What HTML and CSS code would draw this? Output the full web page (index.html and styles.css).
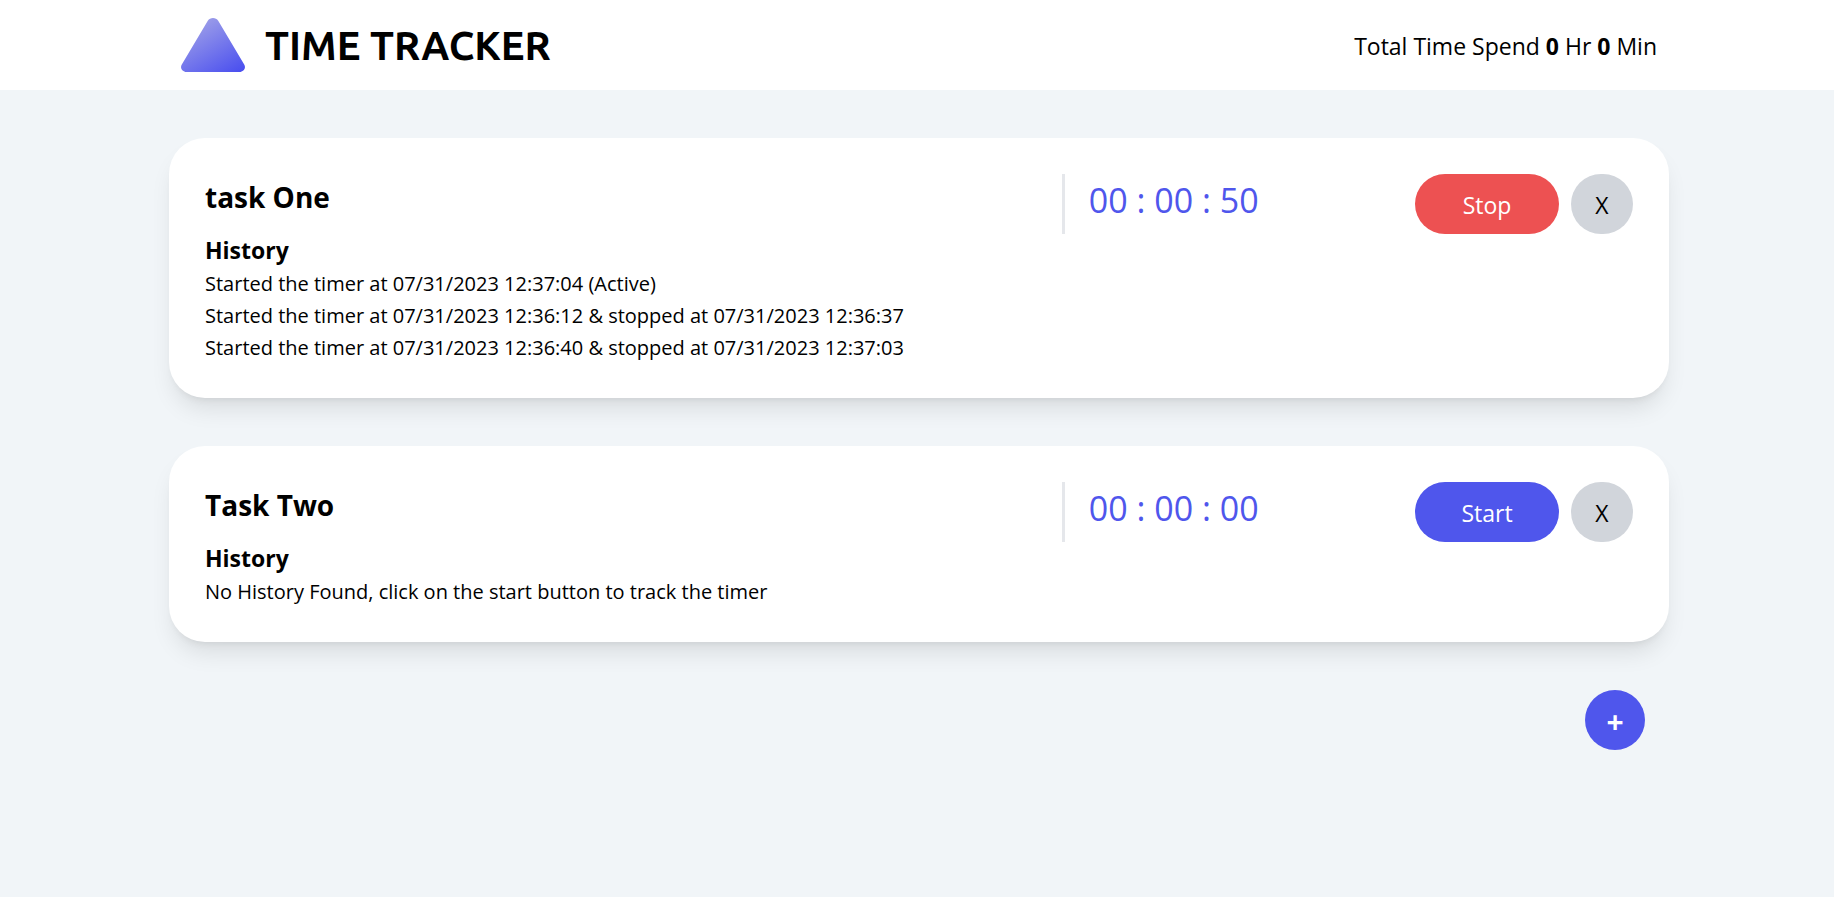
FILE: index.html
```html
<!DOCTYPE html>
<html lang="en">
<head>
<meta charset="utf-8">
<meta name="viewport" content="width=device-width, initial-scale=1">
<title>Time Tracker</title>
<link rel="stylesheet" href="styles.css">
</head>
<body>
<header class="topbar">
  <div class="container topbar-inner">
    <div class="brand">
      <svg class="brand-mark" viewBox="0 0 64 54" aria-hidden="true">
        <defs>
          <linearGradient id="mark" x1="0.2" y1="0" x2="0.9" y2="1">
            <stop offset="0" stop-color="#a3a4e8"/>
            <stop offset="1" stop-color="#4b50ef"/>
          </linearGradient>
        </defs>
        <path fill="url(#mark)" d="M26.8 2.8C29 -0.9 35 -0.9 37.200 2.800L63.200 46.500C65.400 50 62.500 54 58.500 54H5.500C1.500 54 -1.400 50 0.800 46.500Z"/>
      </svg>
      <h1 class="brand-name">TIME TRACKER</h1>
    </div>
    <p class="total">Total Time Spend <b>0</b> Hr <b>0</b> Min</p>
  </div>
</header>
<main class="container tasks">
  <article class="card">
    <div class="card-head">
      <h2 class="task-name">task One</h2>
      <div class="controls">
        <span class="timer">00 : 00 : 50</span>
        <div class="actions">
          <button class="btn btn-stop" type="button">Stop</button>
          <button class="btn btn-remove" type="button">X</button>
        </div>
      </div>
    </div>
    <h3 class="history-title">History</h3>
    <ul class="history">
      <li>Started the timer at 07/31/2023 12:37:04 (Active)</li>
      <li>Started the timer at 07/31/2023 12:36:12 &amp; stopped at 07/31/2023 12:36:37</li>
      <li>Started the timer at 07/31/2023 12:36:40 &amp; stopped at 07/31/2023 12:37:03</li>
    </ul>
  </article>
  <article class="card">
    <div class="card-head">
      <h2 class="task-name">Task Two</h2>
      <div class="controls">
        <span class="timer">00 : 00 : 00</span>
        <div class="actions">
          <button class="btn btn-start" type="button">Start</button>
          <button class="btn btn-remove" type="button">X</button>
        </div>
      </div>
    </div>
    <h3 class="history-title">History</h3>
    <p class="history">No History Found, click on the start button to track the timer</p>
  </article>
  <button class="btn btn-add" type="button">+</button>
</main>
</body>
</html>
```

FILE: styles.css
```css
* {
  box-sizing: border-box;
  margin: 0;
  padding: 0;
}

body {
  min-height: 100vh;
  background: #f1f5f8;
  color: #000;
  font-family: "Segoe UI", "Open Sans", "Noto Sans", sans-serif;
  font-size: 23px;
  line-height: 32px;
}

.container {
  width: 100%;
  max-width: 1504px;
  margin: 0 auto;
}

.topbar {
  background: #fff;
}

.topbar-inner {
  display: flex;
  align-items: center;
  justify-content: space-between;
  min-height: 90px;
  padding: 0 12px 0 16px;
}

.brand {
  display: flex;
  align-items: center;
  gap: 20px;
}

.brand-mark {
  width: 64px;
  height: 54px;
}

.brand-name {
  padding-top: 2px;
  font-family: Ubuntu, "Noto Sans", sans-serif;
  font-size: 40px;
  line-height: 48px;
}

.total {
  padding-top: 2px;
}

.tasks {
  display: flex;
  flex-direction: column;
  gap: 48px;
  padding: 48px 0 48px 4px;
}

.card {
  padding: 36px 36px 34px;
  border-radius: 36px;
  background: #fff;
  box-shadow: 0 15px 23px -5px rgb(0 0 0 / 0.1), 0 6px 9px -6px rgb(0 0 0 / 0.1);
}

.card-head {
  display: grid;
  grid-template-columns: 3fr 2fr;
}

.task-name {
  font-size: 28px;
  line-height: 46px;
}

.controls {
  display: flex;
  justify-content: space-between;
  padding-left: 24px;
  border-left: 3px solid #e5e7eb;
}

.timer {
  color: #4f56ec;
  font-size: 34px;
  line-height: 52px;
}

.actions {
  display: flex;
  gap: 12px;
}

.btn {
  height: 60px;
  padding: 2px 0 0;
  border: 0;
  border-radius: 30px;
  color: #fff;
  font: inherit;
  cursor: pointer;
}

.btn-start,
.btn-stop {
  min-width: 144px;
  padding: 2px 46px 0;
}

.btn-start {
  background: #4f56ec;
}

.btn-stop {
  background: #ed5152;
}

.btn-remove {
  width: 62px;
  background: #d1d5db;
  color: #000;
}

.btn-add {
  align-self: flex-end;
  width: 60px;
  margin-right: 24px;
  padding-top: 4px;
  background: #4f56ec;
  font-size: 30px;
  font-weight: 700;
}

.history-title {
  font-size: 23px;
}

.history {
  padding-top: 2px;
  font-size: 20px;
  list-style: none;
}
```
